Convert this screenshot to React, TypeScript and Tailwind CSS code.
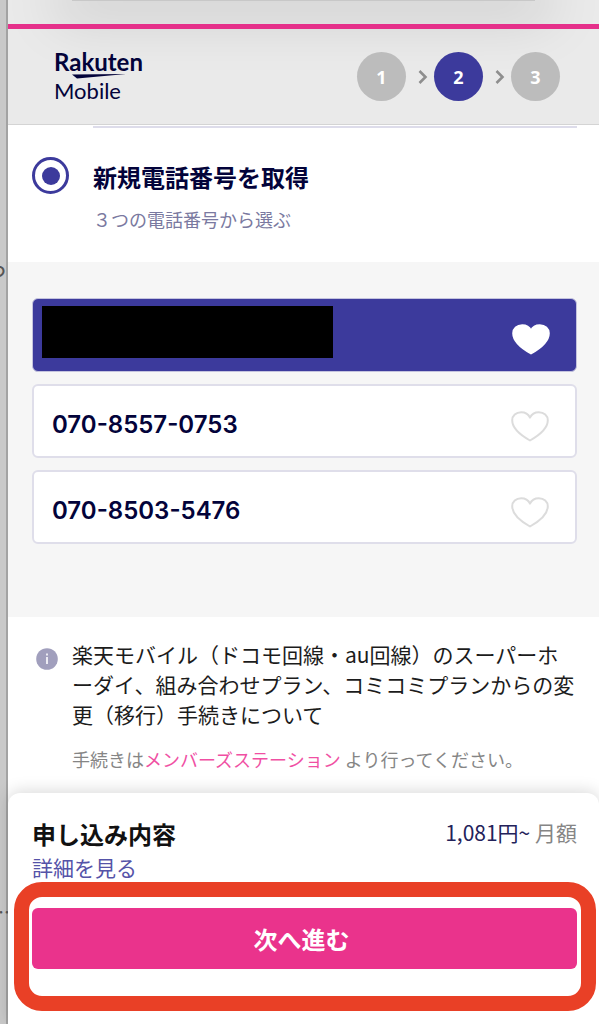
import React from 'react';
import { clsx } from 'clsx';

const STEPS = [1, 2, 3];
const CURRENT_STEP = 2;

const PHONE_NUMBERS = [
  { id: 'hidden', number: '' },
  { id: 'second', number: '070-8557-0753' },
  { id: 'third', number: '070-8503-5476' },
];

const HeartIcon: React.FC<{ filled: boolean }> = ({ filled }) => (
  <svg
    viewBox="0 0 38 32"
    className={clsx('w-[38px] h-8 shrink-0', filled ? 'text-white' : 'text-[#dcdcdc]')}
    fill={filled ? 'currentColor' : 'none'}
    stroke="currentColor"
    strokeWidth="2"
    strokeLinejoin="round"
    aria-hidden="true"
  >
    <path d="M19 30.500C11 26 1.200 18.500 1.200 10.300C1.200 5.500 5 2.200 10.200 2.200C14.300 2.200 17.300 4 19 7.600C20.700 4 23.700 2.200 27.800 2.200C33 2.200 36.800 5.500 36.800 10.300C36.800 18.500 27 26 19 30.500Z" />
  </svg>
);

const Logo: React.FC = () => (
  <div className="flex flex-col text-[#03033a] font-['Lato',sans-serif]">
    <span className="text-2xl leading-6 font-bold">Rakuten</span>
    <svg viewBox="0 0 90 5" className="w-[90px] h-[5px]" fill="currentColor" aria-hidden="true">
      <path d="M18 0.500L72 0L23 4.500Z" />
    </svg>
    <span className="text-[22px] leading-6">Mobile</span>
  </div>
);

const Steps: React.FC = () => (
  <ol className="flex items-center">
    {STEPS.map((step) => (
      <React.Fragment key={step}>
        {step > 1 && (
          <li aria-hidden="true" className="pl-3 pr-1.5">
            <svg viewBox="0 0 10 14" className="w-[10px] h-[14px] text-[#8e8e8e]" fill="none" stroke="currentColor" strokeWidth="2.600">
              <path d="M1.500 1L7.500 7L1.500 13" />
            </svg>
          </li>
        )}
        <li
          className={clsx(
            'flex items-center justify-center size-[49px] rounded-full text-white text-lg font-bold font-["Noto_Sans",sans-serif]',
            step === CURRENT_STEP ? 'bg-[#3c3a9c]' : 'bg-[#bcbcbc]',
          )}
        >
          {step}
        </li>
      </React.Fragment>
    ))}
  </ol>
);

const App: React.FC = () => {
  const [selected, setSelected] = React.useState('hidden');

  return (
    <div className="flex min-h-screen bg-white font-['Noto_Sans_CJK_JP',sans-serif]">
      {/* edge of the page behind */}
      <div className="relative w-2 shrink-0 overflow-hidden bg-[#c9c9c9] shadow-[inset_-2px_0_#a3a3a3] text-lg font-medium text-[#555]">
        <span className="absolute right-0.5 top-64">つ</span>
        <span className="absolute -left-0.5 top-[897px]">…</span>
      </div>

      <div className="flex flex-col flex-1 min-w-0">
        {/* header */}
        <header className="overflow-hidden bg-[#eaeaea] border-b border-[#d4d4d4]">
          <div className="h-px mx-16 bg-[#c8c8c8] shadow-[0_0_56px_16px_#00000026]" />
          <div className="relative mt-[23px] h-[5px] bg-[#e5308a]" />
          <div className="relative flex items-center justify-between h-[95px] pl-[46px] pr-[39px]">
            <Logo />
            <Steps />
          </div>
        </header>

        <main className="flex flex-col flex-1">
          <section className="pl-6 pr-[22px] pb-[29px]">
            <hr className="mt-px ml-[61px] border-t-2 border-[#dddcea]" />
            <label className="flex gap-6 pt-[29px]">
              <input
                type="radio"
                name="method"
                defaultChecked
                className="appearance-none grid place-content-center size-[37px] shrink-0 rounded-full border-[3px] border-[#3c3a9c] before:size-[18px] before:rounded-full before:bg-[#3c3a9c]"
              />
              <span className="flex flex-col gap-2">
                <span className="text-2xl leading-10 font-bold text-[#03033a]">新規電話番号を取得</span>
                <span className="text-lg leading-7 text-[#7a79a0]">３つの電話番号から選ぶ</span>
              </span>
            </label>
          </section>

          {/* phone numbers */}
          <fieldset className="flex flex-col gap-3 pl-6 pr-[22px] pt-9 pb-[73px] bg-[#f6f6f6]">
            {PHONE_NUMBERS.map(({ id, number }) => {
              const isSelected = selected === id;
              return (
                <label
                  key={id}
                  className={clsx(
                    'relative flex justify-between h-[74px] rounded-md pr-[26px]',
                    number ? 'pl-[18px]' : 'pl-[9px]',
                    isSelected
                      ? 'border border-[#c4c3de] bg-[#3c3a9c] text-white'
                      : 'border-2 border-[#dfdeea] bg-white text-[#03033a]',
                  )}
                >
                  <input
                    type="radio"
                    name="phone"
                    value={id}
                    checked={isSelected}
                    onChange={() => setSelected(id)}
                    className="sr-only"
                  />
                  {number ? (
                    <span className="pt-[23px] text-2xl leading-8 font-semibold font-['Inter',sans-serif]">{number}</span>
                  ) : (
                    <span className="mt-[7px] w-[291px] h-[52px] bg-black" />
                  )}
                  <span className="pt-6">
                    <HeartIcon filled={isSelected} />
                  </span>
                </label>
              );
            })}
          </fieldset>

          <section className="flex gap-[14px] pl-7 pr-5 pt-[22px] pb-4">
            <svg viewBox="0 0 22 22" className="mt-[9px] size-[22px] shrink-0" aria-hidden="true">
              <circle cx="11" cy="11" r="10.800" fill="#a19fbd" />
              <path d="M11 5.500V7.500M11 9V16" stroke="#ecebf3" strokeWidth="2" />
            </svg>
            <div>
              <p className="text-[21px] leading-[30px] text-[#1c1c1c]">
                楽天モバイル（ドコモ回線・au回線）のスーパーホーダイ、組み合わせプラン、コミコミプランからの変更（移行）手続きについて
              </p>
              <p className="mt-4 text-lg leading-7 text-[#858585]">
                手続きは
                <a href="#station" className="text-[#f04fa3]">メンバーズステーション</a>
                {' '}より行ってください。
              </p>
            </div>
          </section>
        </main>

        {/* order summary */}
        <footer className="relative pl-6 pr-[22px] pt-[25px] pb-[55px] rounded-t-xl bg-white shadow-[0_-2px_16px_#00000026]">
          <div className="flex justify-between">
            <h2 className="text-2xl leading-8 font-bold text-[#111]">申し込み内容</h2>
            <p className="text-[21px] leading-7 text-[#858585]">
              <span className="text-[#23225a]">1,081円~</span> 月額
            </p>
          </div>
          <a href="#detail" className="block w-fit text-[21px] leading-[34px] text-[#5553a8]">詳細を見る</a>
          <button
            type="button"
            className="mt-6 pr-1.5 w-full h-[61px] rounded-md bg-[#ea338c] text-2xl font-bold text-white"
          >
            次へ進む
          </button>
          <div className="pointer-events-none absolute left-[6px] right-[3px] bottom-[13px] h-[129px] rounded-[28px] border-[15px] border-[#e94026]" />
        </footer>
      </div>
    </div>
  );
};

export default App;
